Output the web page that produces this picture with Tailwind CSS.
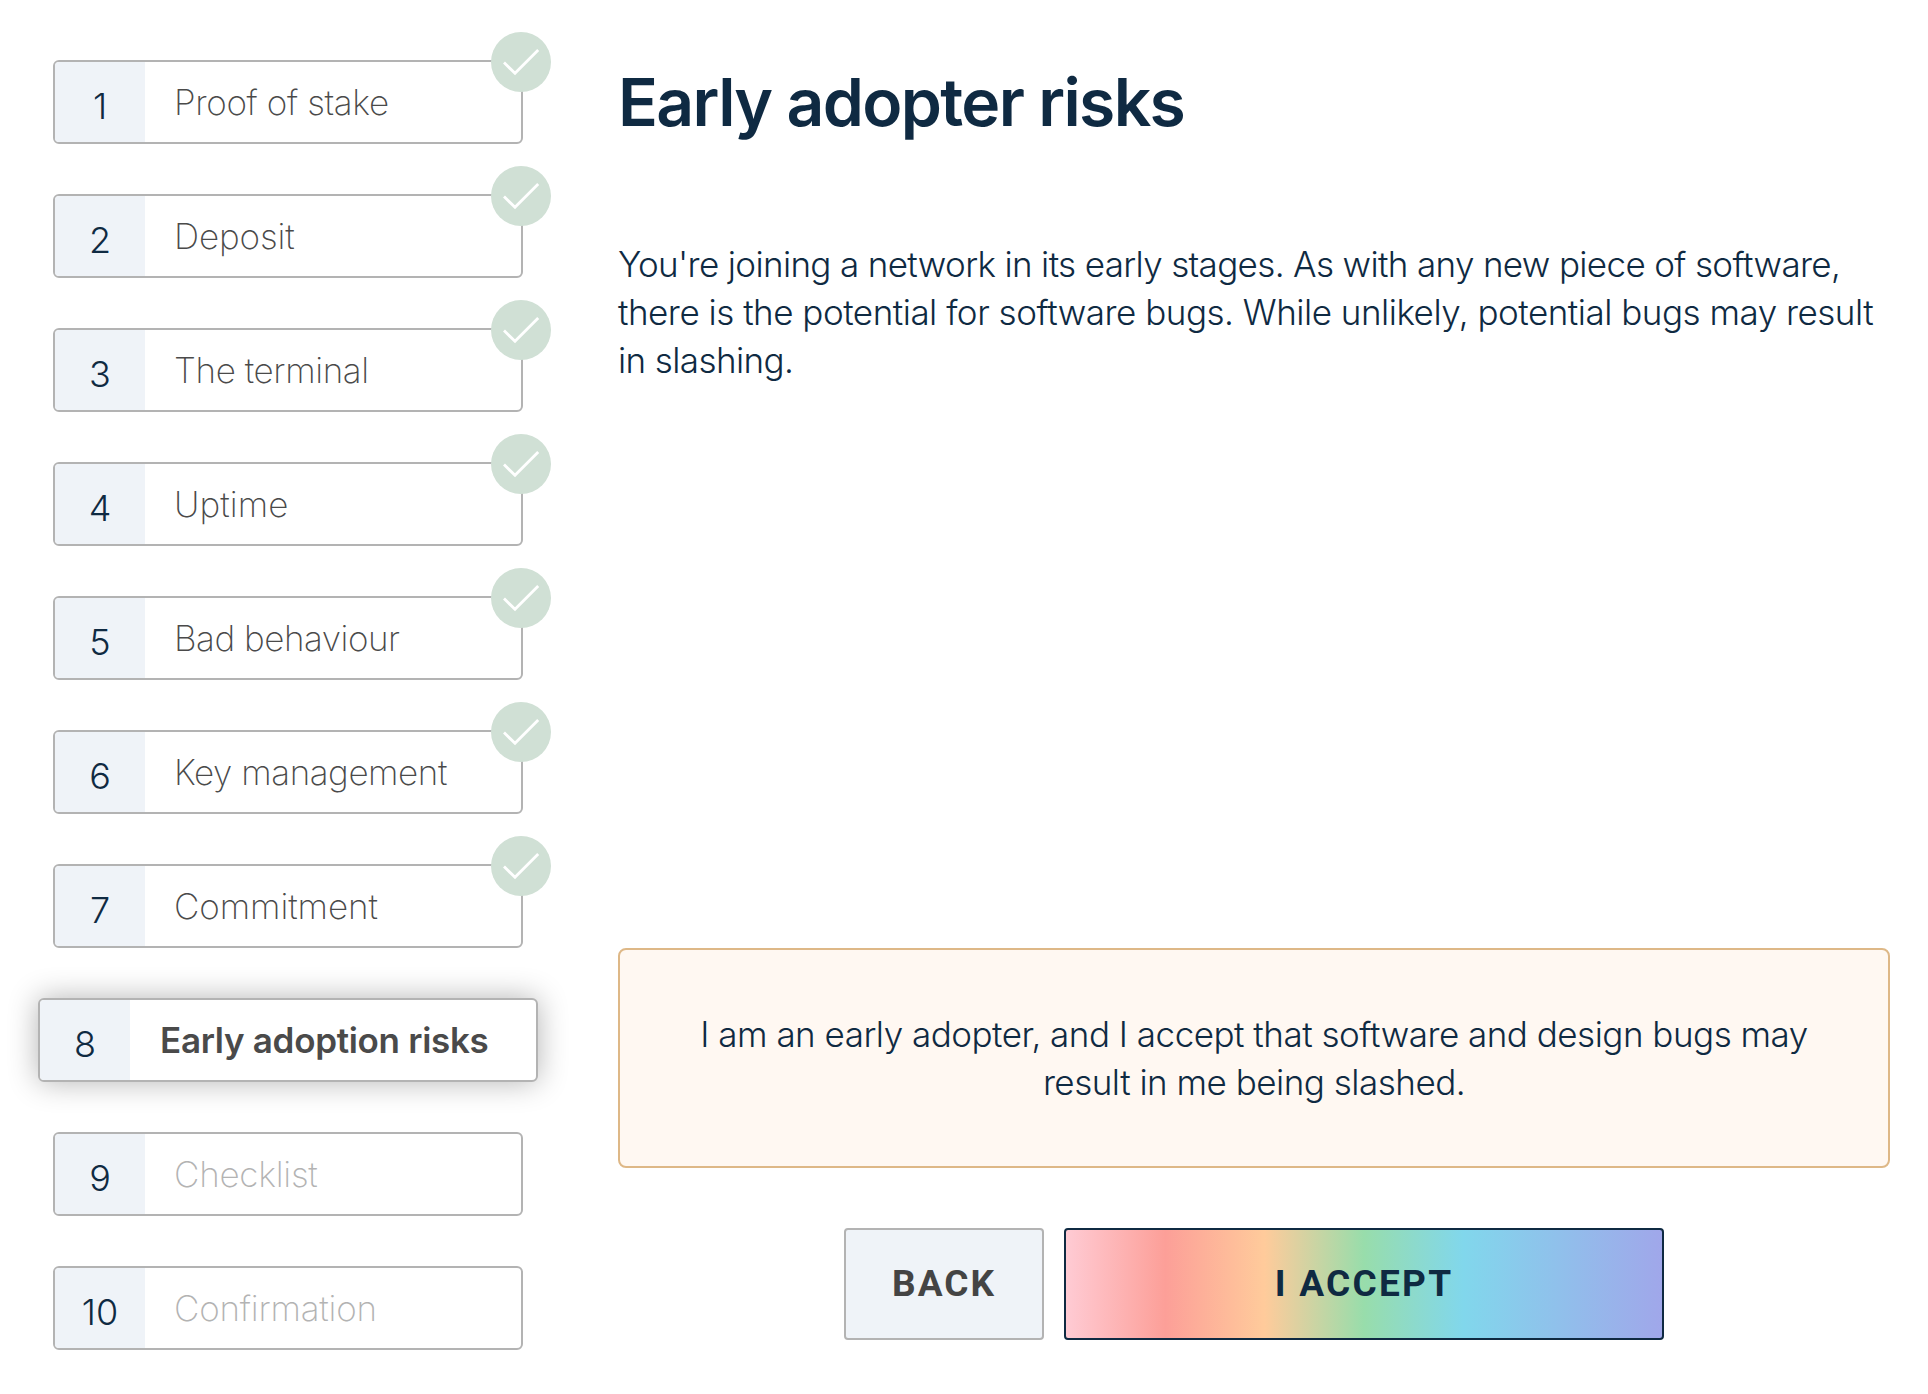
<!DOCTYPE html>
<html lang="en">
<head>
<meta charset="utf-8">
<title>Early adopter risks</title>
<script src="https://cdn.jsdelivr.net/npm/@tailwindcss/browser@4"></script>
</head>
<body class="bg-white font-[Inter,sans-serif] text-[#0f2a42]">
<svg class="hidden">
  <symbol id="check" viewBox="0 0 60 60">
    <circle cx="30" cy="30" r="30" fill="#d0e0d5"/>
    <path d="M13 30.6 24 41.3 47.2 18" fill="none" stroke="#fff" stroke-width="2.8"/>
  </symbol>
</svg>
<div class="flex h-[1394px] w-[1928px] overflow-hidden">
  <nav class="flex w-[618px] shrink-0 flex-col gap-[50px] pl-[53px] pt-[60px] text-[35px] font-[150] text-[#4a4a4a]">
    <div class="relative flex h-[84px] w-[470px] shrink-0 rounded-md border-2 border-[#b3b3b3]">
      <div class="flex w-[90px] items-center justify-center rounded-l bg-[#eff3f8] pt-2 text-[36px] font-light text-[#0f2a42]">1</div>
      <div class="flex items-center pl-[29px] tracking-[-0.37px]">Proof of stake</div>
      <svg class="absolute -right-[30px] -top-[30px] size-[60px]"><use href="#check"/></svg>
    </div>
    <div class="relative flex h-[84px] w-[470px] shrink-0 rounded-md border-2 border-[#b3b3b3]">
      <div class="flex w-[90px] items-center justify-center rounded-l bg-[#eff3f8] pt-2 text-[36px] font-light text-[#0f2a42]">2</div>
      <div class="flex items-center pl-[29px] tracking-[-0.1px]">Deposit</div>
      <svg class="absolute -right-[30px] -top-[30px] size-[60px]"><use href="#check"/></svg>
    </div>
    <div class="relative flex h-[84px] w-[470px] shrink-0 rounded-md border-2 border-[#b3b3b3]">
      <div class="flex w-[90px] items-center justify-center rounded-l bg-[#eff3f8] pt-2 text-[36px] font-light text-[#0f2a42]">3</div>
      <div class="flex items-center pl-[29px] tracking-[-0.4px]">The terminal</div>
      <svg class="absolute -right-[30px] -top-[30px] size-[60px]"><use href="#check"/></svg>
    </div>
    <div class="relative flex h-[84px] w-[470px] shrink-0 rounded-md border-2 border-[#b3b3b3]">
      <div class="flex w-[90px] items-center justify-center rounded-l bg-[#eff3f8] pt-2 text-[36px] font-light text-[#0f2a42]">4</div>
      <div class="flex items-center pl-[29px] tracking-[0.1px]">Uptime</div>
      <svg class="absolute -right-[30px] -top-[30px] size-[60px]"><use href="#check"/></svg>
    </div>
    <div class="relative flex h-[84px] w-[470px] shrink-0 rounded-md border-2 border-[#b3b3b3]">
      <div class="flex w-[90px] items-center justify-center rounded-l bg-[#eff3f8] pt-2 text-[36px] font-light text-[#0f2a42]">5</div>
      <div class="flex items-center pl-[29px] tracking-[-0.46px]">Bad behaviour</div>
      <svg class="absolute -right-[30px] -top-[30px] size-[60px]"><use href="#check"/></svg>
    </div>
    <div class="relative flex h-[84px] w-[470px] shrink-0 rounded-md border-2 border-[#b3b3b3]">
      <div class="flex w-[90px] items-center justify-center rounded-l bg-[#eff3f8] pt-2 text-[36px] font-light text-[#0f2a42]">6</div>
      <div class="flex items-center pl-[29px] tracking-[-0.43px]">Key management</div>
      <svg class="absolute -right-[30px] -top-[30px] size-[60px]"><use href="#check"/></svg>
    </div>
    <div class="relative flex h-[84px] w-[470px] shrink-0 rounded-md border-2 border-[#b3b3b3]">
      <div class="flex w-[90px] items-center justify-center rounded-l bg-[#eff3f8] pt-2 text-[36px] font-light text-[#0f2a42]">7</div>
      <div class="flex items-center pl-[29px] tracking-[-0.08px]">Commitment</div>
      <svg class="absolute -right-[30px] -top-[30px] size-[60px]"><use href="#check"/></svg>
    </div>
    <div class="-ml-[15px] flex h-[84px] w-[500px] shrink-0 rounded-md border-2 border-[#b3b3b3] bg-white shadow-[0_0_30px_rgba(0,0,0,0.3)]">
      <div class="flex w-[90px] items-center justify-center rounded-l bg-[#eff3f8] pt-2 text-[36px] font-light text-[#0f2a42]">8</div>
      <div class="flex items-center pl-[30px] font-semibold tracking-[-0.3px]">Early adoption risks</div>
    </div>
    <div class="flex h-[84px] w-[470px] shrink-0 rounded-md border-2 border-[#b3b3b3]">
      <div class="flex w-[90px] items-center justify-center rounded-l bg-[#eff3f8] pt-2 text-[36px] font-light text-[#0f2a42]">9</div>
      <div class="flex items-center pl-[29px] tracking-[-0.25px] text-[#b3b3b3]">Checklist</div>
    </div>
    <div class="flex h-[84px] w-[470px] shrink-0 rounded-md border-2 border-[#b3b3b3]">
      <div class="flex w-[90px] items-center justify-center rounded-l bg-[#eff3f8] pt-2 text-[36px] font-light text-[#0f2a42]">10</div>
      <div class="flex items-center pl-[29px] tracking-[-0.2px] text-[#b3b3b3]">Confirmation</div>
    </div>
  </nav>
  <main class="flex w-[1272px] flex-col pt-[62px]">
    <h1 class="text-[66px] font-semibold leading-[80px] tracking-[-1.65px]">Early adopter risks</h1>
    <p class="mt-[98px] whitespace-nowrap text-[35px] font-light leading-[48px]">
      <span class="block tracking-[-0.65px]">You're joining a network in its early stages. As with any new piece of software,</span>
      <span class="block tracking-[-0.49px]">there is the potential for software bugs. While unlikely, potential bugs may result</span>
      <span class="block tracking-[-0.6px]">in slashing.</span>
    </p>
    <div class="mt-[564px] flex h-[220px] shrink-0 flex-col justify-center rounded-lg border-2 border-[#deb887] bg-[#fff8f2] text-center text-[35px] font-light leading-[48px] tracking-[-0.5px]">
      <p>I am an early adopter, and I accept that software and design bugs may</p>
      <p>result in me being slashed.</p>
    </div>
    <div class="mt-[60px] flex justify-center gap-5 font-[Roboto,sans-serif] text-[37px] font-bold">
      <button class="h-[112px] w-[200px] rounded border-2 border-[#b3b3b3] bg-[#eff3f8] tracking-[2px] text-[#444]">BACK</button>
      <button class="h-[112px] w-[600px] rounded border-2 border-[#0f2a42] bg-[linear-gradient(90deg,#ffcbd4_0%,#fc9f98_16.67%,#ffcb9b_33.33%,#98ddab_50%,#81d7ec_66.67%,#a0a7ea_100%)] tracking-[2.26px]">I ACCEPT</button>
    </div>
  </main>
</div>
</body>
</html>
